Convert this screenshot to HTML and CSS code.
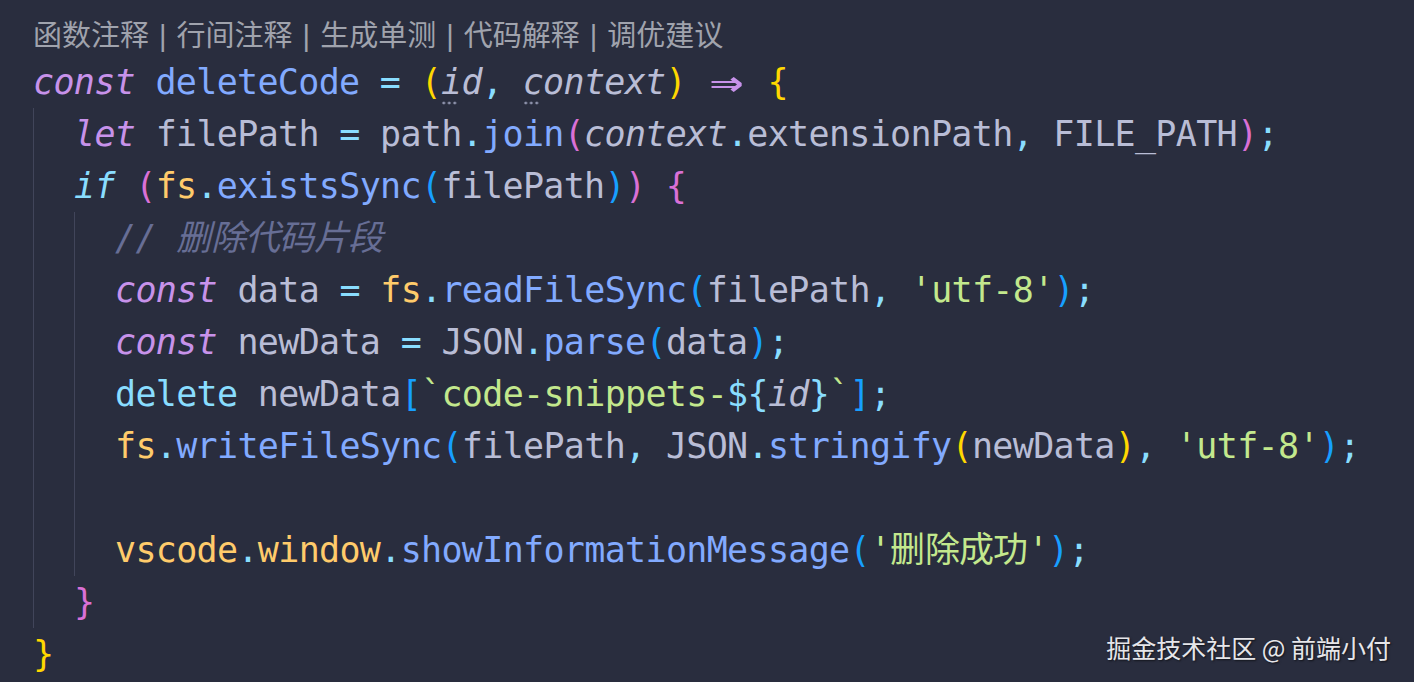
FILE: index.html
```html
<!DOCTYPE html>
<html lang="zh-CN">
<head>
<meta charset="utf-8">
<title>deleteCode</title>
<link rel="stylesheet" href="styles.css">
</head>
<body>
<div class="editor">
  <div class="lens"><span>函数注释</span><span class="sep">|</span><span>行间注释</span><span class="sep">|</span><span>生成单测</span><span class="sep">|</span><span>代码解释</span><span class="sep">|</span><span>调优建议</span></div>
  <div class="code">
    <div class="ln"><span class="kw">const</span> <span class="fn">deleteCode</span> <span class="op">=</span> <span class="b1">(</span><span class="param hint">id</span><span class="pn">,</span> <span class="param hint">context</span><span class="b1">)</span> <span class="arrow"><span class="arrow-glyph">⇒</span></span> <span class="b1">{</span></div>
    <div class="block">
      <div class="ln"><span class="kw">let</span> <span class="var">filePath</span> <span class="op">=</span> <span class="var">path</span><span class="pn">.</span><span class="fn">join</span><span class="b2">(</span><span class="param">context</span><span class="pn">.</span><span class="var">extensionPath</span><span class="pn">,</span> <span class="var">FILE_PATH</span><span class="b2">)</span><span class="pn">;</span></div>
      <div class="ln"><span class="kw2">if</span> <span class="b2">(</span><span class="obj">fs</span><span class="pn">.</span><span class="fn">existsSync</span><span class="b3">(</span><span class="var">filePath</span><span class="b3">)</span><span class="b2">)</span> <span class="b2">{</span></div>
      <div class="block">
        <div class="ln"><span class="cm">// 删除代码片段</span></div>
        <div class="ln"><span class="kw">const</span> <span class="var">data</span> <span class="op">=</span> <span class="obj">fs</span><span class="pn">.</span><span class="fn">readFileSync</span><span class="b3">(</span><span class="var">filePath</span><span class="pn">,</span> <span class="str">'utf-8'</span><span class="b3">)</span><span class="pn">;</span></div>
        <div class="ln"><span class="kw">const</span> <span class="var">newData</span> <span class="op">=</span> <span class="var">JSON</span><span class="pn">.</span><span class="fn">parse</span><span class="b3">(</span><span class="var">data</span><span class="b3">)</span><span class="pn">;</span></div>
        <div class="ln"><span class="kw3">delete</span> <span class="var">newData</span><span class="b3">[</span><span class="str">`code-snippets-</span><span class="op">${</span><span class="param">id</span><span class="op">}</span><span class="str">`</span><span class="b3">]</span><span class="pn">;</span></div>
        <div class="ln"><span class="obj">fs</span><span class="pn">.</span><span class="fn">writeFileSync</span><span class="b3">(</span><span class="var">filePath</span><span class="pn">,</span> <span class="var">JSON</span><span class="pn">.</span><span class="fn">stringify</span><span class="b1">(</span><span class="var">newData</span><span class="b1">)</span><span class="pn">,</span> <span class="str">'utf-8'</span><span class="b3">)</span><span class="pn">;</span></div>
        <div class="ln"></div>
        <div class="ln"><span class="obj">vscode</span><span class="pn">.</span><span class="obj">window</span><span class="pn">.</span><span class="fn">showInformationMessage</span><span class="b3">(</span><span class="str">'删除成功'</span><span class="b3">)</span><span class="pn">;</span></div>
      </div>
      <div class="ln"><span class="b2">}</span></div>
    </div>
    <div class="ln"><span class="b1">}</span></div>
  </div>
  <div class="watermark">掘金技术社区 @ 前端小付</div>
</div>
</body>
</html>
```

FILE: styles.css
```css
html, body {
  margin: 0;
  padding: 0;
  height: 100%;
  background: #292d3e;
}

.editor {
  position: relative;
  box-sizing: border-box;
  min-height: 100vh;
  padding: 10px 0 0 33px;
  background: #292d3e;
}

.lens {
  height: 46px;
  line-height: 46px;
  font-family: "Noto Sans CJK SC", "Noto Sans", sans-serif;
  font-size: 29px;
  color: #a0a3ad;
  white-space: nowrap;
}

.lens .sep {
  display: inline-block;
  margin: 0 10px;
  font-family: "Liberation Sans", sans-serif;
}

.code {
  font-family: "DejaVu Sans Mono", monospace;
  font-size: 35px;
  letter-spacing: -0.67px;
  color: #b9bdd6;
}

.ln {
  height: 52px;
  line-height: 52px;
  white-space: pre;
}

.block {
  border-left: 1px solid #41455a;
  padding-left: 40px;
}

.kw { color: #c792ea; font-style: italic; }
.kw2 { color: #89ddff; font-style: italic; }
.kw3 { color: #89ddff; }
.fn { color: #82aaff; }
.op { color: #89ddff; }
.pn { color: #89ddff; }
.var { color: #b9bdd6; }
.param { color: #b9bdd6; font-style: italic; }
.obj { color: #ffcb6b; }
.str { color: #c3e88d; }
.cm { color: #676e95; font-style: italic; }
.b1 { color: #ffd700; }
.b2 { color: #da70d6; }
.b3 { color: #179fff; }

.arrow {
  display: inline-block;
  width: 40.8px;
  text-align: center;
  color: #c792ea;
  letter-spacing: 0;
}

.arrow-glyph {
  display: inline-block;
  font-weight: bold;
  transform: scale(1.6, 1.2);
}

.hint {
  position: relative;
}

.hint::after {
  content: "";
  position: absolute;
  left: 0;
  top: 100%;
  width: 16px;
  height: 4px;
  margin-top: -1px;
  background: radial-gradient(circle, #8d92ab 1.2px, transparent 1.7px) 0 0 / 5.5px 4px repeat-x;
}

.watermark {
  position: absolute;
  right: 23px;
  bottom: 20px;
  font-family: "Noto Sans CJK SC", "Noto Sans", sans-serif;
  font-size: 25px;
  line-height: 30px;
  color: #e6e6ea;
  text-shadow: 1px 1px 2px rgba(0, 0, 0, 0.6);
}
```
